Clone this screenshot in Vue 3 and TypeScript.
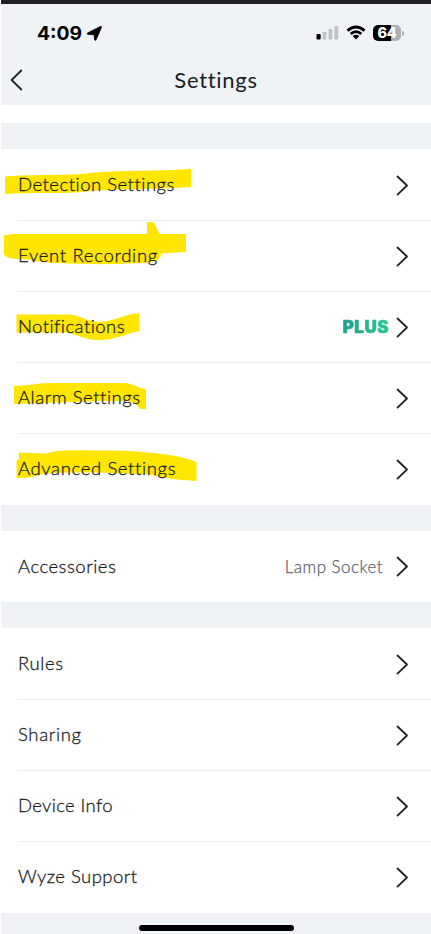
<script setup lang="ts">
interface Row {
  label: string
  spacing: number
  value?: string
  plus?: boolean
}

interface Group {
  id: string
  marked?: boolean
  rows: Row[]
}

const groups: Group[] = [
  {
    id: 'camera',
    marked: true,
    rows: [
      { label: 'Detection Settings', spacing: 0.5 },
      { label: 'Event Recording', spacing: 0.7 },
      { label: 'Notifications', spacing: 0.45, plus: true },
      { label: 'Alarm Settings', spacing: 0.53 },
      { label: 'Advanced Settings', spacing: 0.63 },
    ],
  },
  { id: 'accessories', rows: [{ label: 'Accessories', spacing: 0.5, value: 'Lamp Socket' }] },
  {
    id: 'general',
    rows: [
      { label: 'Rules', spacing: 0.6 },
      { label: 'Sharing', spacing: 0.65 },
      { label: 'Device Info', spacing: 0.35 },
      { label: 'Wyze Support', spacing: 0.47 },
    ],
  },
]

const highlights: string[] = [
  'M5 176.5 C35 174 72 176 96 172.5 C122 170 155 171.5 191 169 V187 C150 190 110 188 84 192 C55 194 30 192 5 194 Z',
  'M4 235.5 L13 234 H147 V222 H153 C156 225 157 230 160 234 H186 V252 L161 253.5 C161 259 157 261 152 262 C130 265 60 265 35 261 C25 258 4 261 4 253 Z',
  'M16.5 314.5 H70 C80 315 87 322 100 322 C113 321 123 316 134 313.5 H139.5 V331 C127 333 116 340 99 340 C83 340 77 334 66 332.5 H16.5 Z',
  'M14 386 C28 386 37 383 50 383 H124 C133 383 139 389 146 389 V409 H141 C137 406 136 402 129 401.5 C95 400 65 403 44 403 C34 403 27 404 14 404 Z',
  'M19 452.5 L46 453.5 C60 448 91 451 119 450.5 C147 452 177 454 196.5 462 V481 C178 480 164 478 149 474.5 C113 473 83 472 54 473 C37 474 33 478 24 478 H16.5 V460.5 L19 459 Z',
]
</script>

<template>
  <main class="screen">
    <header class="top">
      <div class="status">
        <div class="clock">
          <span class="time">4:09</span>
          <svg class="location" width="17" height="17" viewBox="0 0 17 17">
            <path d="M1.4 8 L14.4 1.4 Q16 .9 15.5 2.5 L10 15 Q9.3 16 8.6 14.9 L8 9.8 L2 9.4 Q.6 8.8 1.4 8 Z" />
          </svg>
        </div>
        <div class="indicators">
          <svg class="signal" width="23" height="16" viewBox="0 0 23 16">
            <rect x=".5" y="9" width="4.2" height="5.5" rx="1.1" fill="#000" />
            <rect x="6.6" y="6.7" width="3.8" height="7.8" rx="1" fill="#bfc2c4" />
            <rect x="12.5" y="4" width="3.8" height="10.5" rx="1" fill="#bfc2c4" />
            <rect x="18.4" y="1" width="3.8" height="13.5" rx="1" fill="#bfc2c4" />
          </svg>
          <svg class="wifi" width="20" height="16" viewBox="0 0 20 16">
            <path d="M1.5 5.6 Q10 -1.6 18.5 5.6" />
            <path d="M4.7 8.9 Q10 4.4 15.3 8.9" />
            <path class="dot" d="M6.7 11 Q10 8.3 13.3 11 L10 14.5 Z" />
          </svg>
          <div class="battery">
            <span class="cell">64</span>
            <span class="cap"></span>
          </div>
        </div>
      </div>
      <nav class="titlebar">
        <svg class="back" width="14" height="22" viewBox="0 0 14 22">
          <path d="M12.3 1.5 L2.6 11 L12.3 20.5" />
        </svg>
        <h1 class="title">Settings</h1>
      </nav>
    </header>

    <section v-for="group in groups" :key="group.id" class="group">
      <svg v-if="group.marked" class="marker" width="215" height="355" viewBox="0 150 215 355">
        <path v-for="(d, i) in highlights" :key="i" :d="d" />
      </svg>
      <div v-for="row in group.rows" :key="row.label" class="row">
        <span class="label" :style="{ letterSpacing: row.spacing + 'px' }">{{ row.label }}</span>
        <span v-if="row.plus" class="plus">PLUS</span>
        <span v-if="row.value" class="value">{{ row.value }}</span>
        <svg class="chevron" width="13" height="21" viewBox="0 0 13 21">
          <path d="M1.5 1.5 L11 10.5 L1.5 19.6" />
        </svg>
      </div>
    </section>

    <footer class="bottom">
      <div class="home"></div>
    </footer>
  </main>
</template>

<style>
body {
  background: #fff;
}
</style>

<style scoped>
.screen {
  box-sizing: border-box;
  width: 431px;
  height: 934px;
  padding-left: 1px;
  overflow: hidden;
  background: #fff;
  color: #1a1e23;
  font-family: Lato, "Open Sans", sans-serif;
}

.top {
  box-sizing: border-box;
  height: 105px;
  margin-bottom: 18.4px;
  border-top: 4px solid #202026;
  background: #eff3f6;
}

.status {
  display: flex;
  justify-content: space-between;
  height: 52px;
  padding: 0 27px 0 36px;
  color: #000;
}

.clock,
.indicators {
  display: flex;
  align-items: center;
  height: 58px;
}

.time {
  font: 700 19.3px/24px Inter, sans-serif;
}

.location {
  margin-left: 4px;
}

.location path {
  stroke: #000;
  stroke-width: 0.7;
}

.signal {
  margin-right: 7px;
}

.wifi {
  margin-right: 7px;
  fill: none;
  stroke: #000;
  stroke-width: 2.7;
}

.wifi .dot {
  fill: #000;
  stroke: none;
}

.battery {
  display: flex;
  align-items: center;
  gap: 1px;
}

.cell {
  width: 28px;
  height: 15.5px;
  border-radius: 5px;
  background: linear-gradient(90deg, #000 64%, #adb0b2 64%);
  color: #fff;
  font: 800 14.5px/15.5px Inter, sans-serif;
  letter-spacing: -0.4px;
  text-align: center;
}

.cap {
  width: 2px;
  height: 5px;
  border-radius: 0 2px 2px 0;
  background: #adb0b2;
}

.titlebar {
  display: grid;
  grid-template-columns: 40px 1fr 40px;
  align-items: center;
  height: 47px;
}

.back {
  margin-left: 8px;
}

.back path,
.chevron path {
  fill: none;
  stroke: #1e2328;
  stroke-width: 1.8;
  stroke-linecap: round;
  stroke-linejoin: round;
}

.title {
  margin: 0;
  font-size: 22px;
  font-weight: 400;
  line-height: 28px;
  letter-spacing: 0.7px;
  text-align: center;
}

.group {
  position: relative;
  padding-top: 26.4px;
  background: linear-gradient(#eff3f6 26.4px, #fff 26.4px);
}

.marker {
  position: absolute;
  top: 26.4px;
  left: -1px;
  fill: #ffe600;
}

.row {
  position: relative;
  display: flex;
  align-items: center;
  box-sizing: border-box;
  height: 71px;
  padding: 0 22px 0 17px;
}

.row + .row::before {
  content: "";
  position: absolute;
  top: -0.5px;
  right: 0;
  left: 17px;
  height: 1px;
  background: #eceeef;
}

.label {
  flex: 1;
  padding-bottom: 2px;
  font-size: 18.5px;
  font-weight: 300;
  line-height: 24px;
  white-space: nowrap;
  -webkit-text-stroke: 0.3px #1a1e23;
}

.plus {
  margin-right: 7px;
  background: linear-gradient(100deg, #1f9e8b, #2fc892);
  background-clip: text;
  color: transparent;
  font-family: Inter, sans-serif;
  font-size: 17px;
  font-weight: 900;
  letter-spacing: 0.5px;
  -webkit-text-stroke: 0.6px transparent;
}

.value {
  margin-right: 13px;
  padding-bottom: 1px;
  color: #5a636d;
  font-size: 17px;
  font-weight: 300;
  letter-spacing: 0.45px;
  -webkit-text-stroke: 0.25px #5a636d;
}

.bottom {
  display: flex;
  justify-content: center;
  height: 22px;
  background: #eff3f6;
}

.home {
  width: 155px;
  height: 6px;
  margin-top: 12.5px;
  border-radius: 3px;
  background: #000;
}
</style>
